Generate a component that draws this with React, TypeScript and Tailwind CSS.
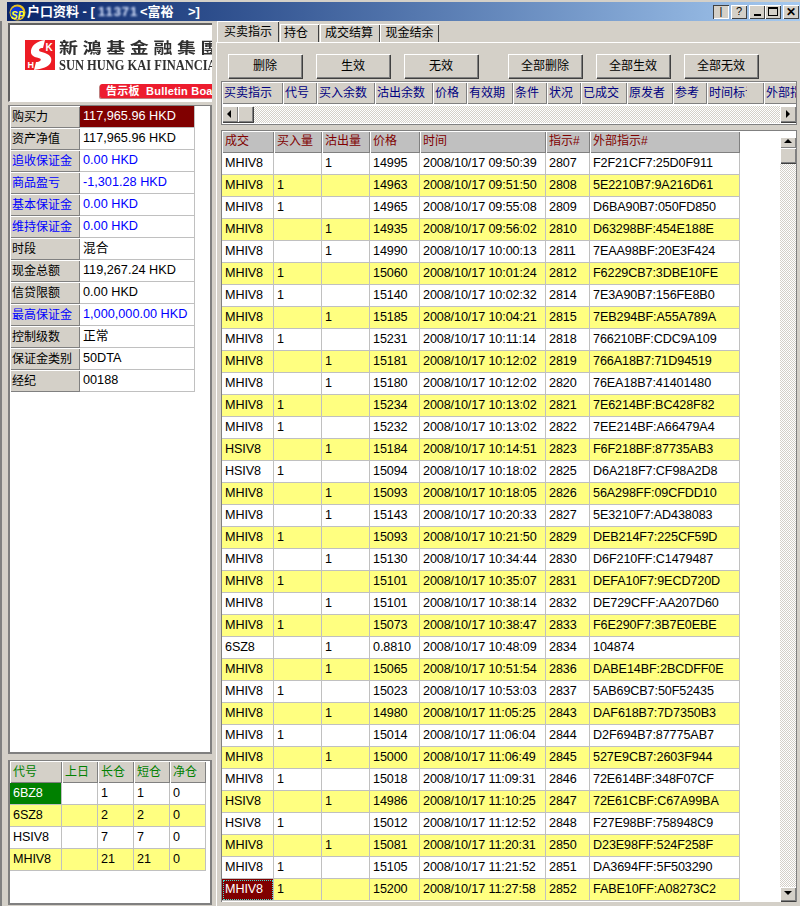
import React from "react";

const trades: [string, string, string, string, string, string, string][] = [
  ["MHIV8", "", "1", "14995", "2008/10/17 09:50:39", "2807", "F2F21CF7:25D0F911"],
  ["MHIV8", "1", "", "14963", "2008/10/17 09:51:50", "2808", "5E2210B7:9A216D61"],
  ["MHIV8", "1", "", "14965", "2008/10/17 09:55:08", "2809", "D6BA90B7:050FD850"],
  ["MHIV8", "", "1", "14935", "2008/10/17 09:56:02", "2810", "D63298BF:454E188E"],
  ["MHIV8", "", "1", "14990", "2008/10/17 10:00:13", "2811", "7EAA98BF:20E3F424"],
  ["MHIV8", "1", "", "15060", "2008/10/17 10:01:24", "2812", "F6229CB7:3DBE10FE"],
  ["MHIV8", "1", "", "15140", "2008/10/17 10:02:32", "2814", "7E3A90B7:156FE8B0"],
  ["MHIV8", "", "1", "15185", "2008/10/17 10:04:21", "2815", "7EB294BF:A55A789A"],
  ["MHIV8", "1", "", "15231", "2008/10/17 10:11:14", "2818", "766210BF:CDC9A109"],
  ["MHIV8", "", "1", "15181", "2008/10/17 10:12:02", "2819", "766A18B7:71D94519"],
  ["MHIV8", "", "1", "15180", "2008/10/17 10:12:02", "2820", "76EA18B7:41401480"],
  ["MHIV8", "1", "", "15234", "2008/10/17 10:13:02", "2821", "7E6214BF:BC428F82"],
  ["MHIV8", "1", "", "15232", "2008/10/17 10:13:02", "2822", "7EE214BF:A66479A4"],
  ["HSIV8", "", "1", "15184", "2008/10/17 10:14:51", "2823", "F6F218BF:87735AB3"],
  ["HSIV8", "1", "", "15094", "2008/10/17 10:18:02", "2825", "D6A218F7:CF98A2D8"],
  ["MHIV8", "", "1", "15093", "2008/10/17 10:18:05", "2826", "56A298FF:09CFDD10"],
  ["MHIV8", "", "1", "15143", "2008/10/17 10:20:33", "2827", "5E3210F7:AD438083"],
  ["MHIV8", "1", "", "15093", "2008/10/17 10:21:50", "2829", "DEB214F7:225CF59D"],
  ["MHIV8", "", "1", "15130", "2008/10/17 10:34:44", "2830", "D6F210FF:C1479487"],
  ["MHIV8", "1", "", "15101", "2008/10/17 10:35:07", "2831", "DEFA10F7:9ECD720D"],
  ["MHIV8", "", "1", "15101", "2008/10/17 10:38:14", "2832", "DE729CFF:AA207D60"],
  ["MHIV8", "1", "", "15073", "2008/10/17 10:38:47", "2833", "F6E290F7:3B7E0EBE"],
  ["6SZ8", "", "1", "0.8810", "2008/10/17 10:48:09", "2834", "104874"],
  ["MHIV8", "", "1", "15065", "2008/10/17 10:51:54", "2836", "DABE14BF:2BCDFF0E"],
  ["MHIV8", "1", "", "15023", "2008/10/17 10:53:03", "2837", "5AB69CB7:50F52435"],
  ["MHIV8", "", "1", "14980", "2008/10/17 11:05:25", "2843", "DAF618B7:7D7350B3"],
  ["MHIV8", "1", "", "15014", "2008/10/17 11:06:04", "2844", "D2F694B7:87775AB7"],
  ["MHIV8", "", "1", "15000", "2008/10/17 11:06:49", "2845", "527E9CB7:2603F944"],
  ["MHIV8", "1", "", "15018", "2008/10/17 11:09:31", "2846", "72E614BF:348F07CF"],
  ["HSIV8", "", "1", "14986", "2008/10/17 11:10:25", "2847", "72E61CBF:C67A99BA"],
  ["HSIV8", "1", "", "15012", "2008/10/17 11:12:52", "2848", "F27E98BF:758948C9"],
  ["MHIV8", "", "1", "15081", "2008/10/17 11:20:31", "2850", "D23E98FF:524F258F"],
  ["MHIV8", "1", "", "15105", "2008/10/17 11:21:52", "2851", "DA3694FF:5F503290"],
  ["MHIV8", "1", "", "15200", "2008/10/17 11:27:58", "2852", "FABE10FF:A08273C2"],
];

const account: [string, string, boolean][] = [
  ["购买力", "117,965.96 HKD", false],
  ["资产净值", "117,965.96 HKD", false],
  ["追收保证金", "0.00 HKD", true],
  ["商品盈亏", "-1,301.28 HKD", true],
  ["基本保证金", "0.00 HKD", true],
  ["维持保证金", "0.00 HKD", true],
  ["时段", "混合", false],
  ["现金总额", "119,267.24 HKD", false],
  ["信贷限额", "0.00 HKD", false],
  ["最高保证金", "1,000,000.00 HKD", true],
  ["控制级数", "正常", false],
  ["保证金类别", "50DTA", false],
  ["经纪", "00188", false],
];

const positions: [string, string, string, string, string][] = [
  ["6BZ8", "", "1", "1", "0"],
  ["6SZ8", "", "2", "2", "0"],
  ["HSIV8", "", "7", "7", "0"],
  ["MHIV8", "", "21", "21", "0"],
];

const orderHeads: [string, string, string][] = [
  ["买卖指示", "w-[61px]", "w-[56px]"],
  ["代号", "w-[34px]", "w-[30px]"],
  ["买入余数", "w-[58px]", "w-[54px]"],
  ["沽出余数", "w-[58px]", "w-[54px]"],
  ["价格", "w-[34px]", "w-[30px]"],
  ["有效期", "w-[46px]", "w-[42px]"],
  ["条件", "w-[34px]", "w-[30px]"],
  ["状况", "w-[34px]", "w-[30px]"],
  ["已成交", "w-[46px]", "w-[42px]"],
  ["原发者", "w-[46px]", "w-[42px]"],
  ["参考", "w-[34px]", "w-[30px]"],
  ["时间标记", "w-[57px]", "w-[38px]"],
  ["外部指示", "w-[36px]", "w-[32px]"],
];

const tradeCols = "grid grid-cols-[52px_48px_48px_50px_126px_44px_150px] w-[518px]";
const posCols = "grid grid-cols-[52px_36px_36px_36px_36px] w-[196px]";
const raised =
  "bg-[#d4d0c8] shadow-[inset_1px_1px_0_#ffffff,inset_-1px_-1px_0_#808080,1px_1px_0_#404040]";
const gridHead =
  "flex items-center overflow-hidden whitespace-nowrap text-[12px] shadow-[inset_1px_1px_0_#ffffff,inset_-1px_-1px_0_#808080]";
const cell =
  "flex items-center pl-[3px] overflow-hidden whitespace-nowrap border-r border-b border-[#c0c0c0] text-[12.6px] tracking-[-0.1px]";
const track =
  "bg-[repeating-conic-gradient(#d4d0c8_0%_25%,#ffffff_0%_50%)] bg-[length:2px_2px]";

function Arrow({ dir }: { dir: "up" | "down" | "left" | "right" }) {
  const pts = {
    up: "1,5 9,5 5,1",
    down: "1,2 9,2 5,6",
    left: "6,1 6,9 2,5",
    right: "3,1 3,9 7,5",
  }[dir];
  return (
    <svg width="10" height="10" viewBox="0 0 10 10">
      <polygon points={pts} fill="#000" />
    </svg>
  );
}

function ScrollBtn({ dir, className }: { dir: "up" | "down" | "left" | "right"; className: string }) {
  return <div className={`flex items-center justify-center shrink-0 ${raised} ${className}`}><Arrow dir={dir} /></div>;
}

function TitleBtn({ children, pressed }: { children: React.ReactNode; pressed?: boolean }) {
  return (
    <div
      className={`w-[16px] h-[14px] flex items-center justify-center text-black text-[11px] leading-none ${
        pressed
          ? "bg-[#d4d0c8] shadow-[inset_1px_1px_0_#404040,inset_-1px_-1px_0_#ffffff]"
          : "bg-[#d4d0c8] shadow-[inset_1px_1px_0_#ffffff,inset_-1px_-1px_0_#404040]"
      }`}
    >
      {children}
    </div>
  );
}

function Logo() {
  return (
    <svg width="30" height="30" viewBox="0 0 30 30" className="shrink-0">
      <rect width="30" height="30" fill="#ed1c24" />
      <path
        d="M6 13C5 6 12 1 20 0L18 8C14 8 13 10 15 11.500C22 13 28 16 26 22C24 27 17 29 9 30L11 22C15 22 17 20 15 18.500C11 17 7 17 6 13Z"
        fill="#fff"
      />
      <text x="20.500" y="11" fontSize="10" fontWeight="700" fill="#fff" fontFamily="Liberation Sans">K</text>
      <text x="2.500" y="28" fontSize="9" fontWeight="700" fill="#fff" fontFamily="Liberation Sans">H</text>
    </svg>
  );
}

function AppIcon() {
  return (
    <svg width="17" height="17" viewBox="0 0 17 17" className="shrink-0">
      <circle cx="8.500" cy="8.500" r="8" fill="#e8c020" />
      <circle cx="8" cy="9" r="6.500" fill="#1038d8" />
      <text x="2" y="15" fontSize="10" fontWeight="700" fontStyle="italic" fill="#ffff30" fontFamily="Liberation Sans">SP</text>
    </svg>
  );
}

export default function App() {
  return (
    <div className="relative w-[800px] h-[906px] overflow-hidden bg-[#d4d0c8] pt-[2px] font-['Liberation_Sans','Noto_Sans_CJK_SC',sans-serif] text-black">
      <div className="ml-[7px] h-[19px] flex items-center bg-gradient-to-r from-[#0a246a] to-[#a6caf0] pl-[2px] pr-[1px]">
        <div className="mt-[2px]"><AppIcon /></div>
        <span className="ml-[1px] text-white text-[13px] font-bold whitespace-nowrap leading-none">户口资料 - [</span>
        <span className="w-[42px] ml-[3px] text-[#dbe6ff] text-[13px] font-bold blur-[1px] tracking-[1px] whitespace-nowrap overflow-hidden leading-none">11371</span>
        <span className="text-white text-[13px] font-bold whitespace-pre leading-none">{"<富裕    >]"}</span>
        <div className="ml-auto flex items-center">
          <div className="mr-[2px]"><TitleBtn pressed>|</TitleBtn></div>
          <div className="mr-[2px]"><TitleBtn>?</TitleBtn></div>
          <TitleBtn><span className="block w-[7px] h-[2px] bg-black mt-[6px]" /></TitleBtn>
          <TitleBtn><span className="block w-[10px] h-[9px] border border-black border-t-2" /></TitleBtn>
          <div className="ml-[2px]"><TitleBtn><span className="font-bold text-[12px]">✕</span></TitleBtn></div>
        </div>
      </div>

      <div className="flex h-[885px]">
        {/* left column */}
        <div className="w-[212px] shrink-0 pl-[8px] pt-[2px] border-l-2 border-[#808080] flex flex-col">
          <div className="-ml-[2px] w-[204px] h-[79px] shrink-0 bg-white border-t-2 border-l-2 border-[#606060] border-b border-b-[#ffffff] overflow-hidden pl-[15px] pt-[15px]">
            <div className="flex h-[30px]">
              <Logo />
              <div className="ml-[4px] -mt-[3px]">
                <div className="h-[20px] text-[19px] leading-[20px] tracking-[4.600px] font-bold text-[#303030] whitespace-nowrap font-['Noto_Sans_CJK_TC',sans-serif] origin-center scale-y-[0.8]">新鴻基金融集團</div>
                <div className="h-[14px] mt-[1px] text-[14.500px] leading-[14px] font-bold text-[#303030] whitespace-nowrap font-['Liberation_Serif',serif] origin-left scale-x-[0.86]">SUN HUNG KAI FINANCIAL</div>
              </div>
            </div>
            <div className="ml-[75px] mt-[14px] h-[14px] w-[130px] bg-[#ed1c2e] rounded-l-[2px] shadow-[-1px_1px_0_#c08080] text-white text-[11px] font-bold whitespace-pre flex items-center pl-[6px] tracking-[0.2px]">{"告示板  Bulletin Board"}</div>
          </div>
          <div className="-ml-[2px] mt-[3px] w-[204px] h-[649px] shrink-0 bg-white border-t border-l-2 border-[#808080] border-r-2 border-b-2">
            {account.map(([k, v, blue], i) => (
              <div key={k} className="grid grid-cols-[70px_115px] h-[22px]">
                <div className={`flex items-center pl-[2px] text-[12px] whitespace-nowrap bg-[#d4d0c8] shadow-[inset_1px_1px_0_#ffffff,inset_-1px_-1px_0_#808080] ${blue ? "text-[#0000ff]" : "text-black"}`}>{k}</div>
                <div className={`flex items-center pl-[3px] text-[12.700px] whitespace-nowrap border-r border-b border-[#c0c0c0] ${i === 0 ? "bg-[#800000] text-white" : blue ? "text-[#0000ff]" : "text-black"}`}>{v}</div>
              </div>
            ))}
          </div>
          <div className="-ml-[2px] mt-[6px] w-[204px] h-[145px] shrink-0 bg-white border-t border-l-2 border-[#808080] border-r-2 border-b-2">
            <div className={posCols}>
              {["代号", "上日", "长仓", "短仓", "净仓"].map((h) => (
                <div key={h} className={`${gridHead} pl-[3px] h-[22px] bg-[#d4d0c8] text-[#008000]`}>{h}</div>
              ))}
            </div>
            {positions.map((r, i) => (
              <div key={i} className={`${posCols} h-[22px] ${i % 2 === 1 ? "bg-[#ffff80]" : "bg-white"}`}>
                {r.map((c, j) => (
                  <div key={j} className={`${cell} ${i === 0 && j === 0 ? "bg-[#008000] text-white" : ""}`}>{c}</div>
                ))}
              </div>
            ))}
          </div>
        </div>

        {/* right column */}
        <div className="flex-1 min-w-0 ml-[4px] flex flex-col">
          <div className="flex items-end h-[21px] pl-[1px] shrink-0 text-[12px]">
            <div className="w-[62px] h-[21px] mr-[1px] flex items-center justify-center bg-[#d4d0c8] shadow-[inset_1px_1px_0_#ffffff,inset_-1px_0_0_#404040]">买卖指示</div>
            <div className="w-[39px] h-[18px] mr-[1px] flex items-center pl-[4px] bg-[#d4d0c8] shadow-[inset_1px_1px_0_#ffffff,inset_-1px_0_0_#404040]">持仓</div>
            <div className="w-[60px] h-[18px] flex items-center pl-[5px] bg-[#d4d0c8] shadow-[inset_1px_1px_0_#ffffff,inset_-1px_0_0_#404040]">成交结算</div>
            <div className="w-[59px] h-[18px] flex items-center justify-center bg-[#d4d0c8] shadow-[inset_1px_1px_0_#ffffff,inset_-1px_0_0_#404040]">现金结余</div>
          </div>
          <div className="flex-1 border-t border-l border-white pl-[4px] min-h-0">
            <div className="flex pt-[11px] pl-[7px] h-[37px] text-[12px]">
              <button className={`w-[74px] h-[24px] ${raised}`}>删除</button>
              <button className={`w-[74px] h-[24px] ml-[14px] ${raised}`}>生效</button>
              <button className={`w-[74px] h-[24px] ml-[14px] ${raised}`}>无效</button>
              <button className={`w-[74px] h-[24px] ml-[30px] ${raised}`}>全部删除</button>
              <button className={`w-[74px] h-[24px] ml-[14px] ${raised}`}>全部生效</button>
              <button className={`w-[74px] h-[24px] ml-[14px] ${raised}`}>全部无效</button>
            </div>
            <div className="mt-[1px] w-[576px] h-[44px] border border-[#808080] overflow-hidden bg-white">
              <div className="flex h-[22px] overflow-hidden">
                {orderHeads.map(([h, w, inner]) => (
                  <div key={h} className={`${gridHead} ${w} shrink-0 h-[22px] bg-[#d4d0c8] text-[#000080] pl-[2px]`}>
                    <span className={`${inner} block overflow-hidden`}>{h}</span>
                  </div>
                ))}
              </div>
              <div className={`flex h-[17px] mt-[2px] ${track}`}>
                <ScrollBtn dir="left" className="w-[16px] h-[16px]" />
                <div className={`w-[15px] h-[16px] ${raised}`} />
                <div className="flex-1" />
                <ScrollBtn dir="right" className="w-[16px] h-[16px]" />
              </div>
            </div>
            <div className="mt-[5px] w-[576px] h-[772px] flex border-t border-l border-r border-[#808080] bg-white overflow-hidden">
              <div className="w-[558px] shrink-0">
                <div className={tradeCols}>
                  {["成交", "买入量", "沽出量", "价格", "时间", "指示#", "外部指示#"].map((h) => (
                    <div key={h} className={`${gridHead} pl-[3px] pb-[2px] h-[22px] bg-[#c0c0c0] text-[#800000]`}>{h}</div>
                  ))}
                </div>
                {trades.map((r, i) => (
                  <div key={i} className={`${tradeCols} h-[22px] ${i % 2 === 1 ? "bg-[#ffff80]" : "bg-white"}`}>
                    {r.map((c, j) => (
                      <div
                        key={j}
                        className={`${cell} ${
                          i === trades.length - 1 && j === 0
                            ? "bg-[#800000] text-white outline-1 outline-dotted -outline-offset-2 outline-[#40e0d0]"
                            : ""
                        }`}
                      >
                        {c}
                      </div>
                    ))}
                  </div>
                ))}
              </div>
              <div className={`w-[16px] mt-[6px] mb-[1px] flex flex-col ${track}`}>
                <ScrollBtn dir="up" className="w-[16px] h-[11px]" />
                <div className={`w-[16px] h-[15px] ${raised}`} />
                <div className="flex-1" />
                <ScrollBtn dir="down" className="w-[16px] h-[14px]" />
              </div>
            </div>
          </div>
        </div>
      </div>
    </div>
  );
}
